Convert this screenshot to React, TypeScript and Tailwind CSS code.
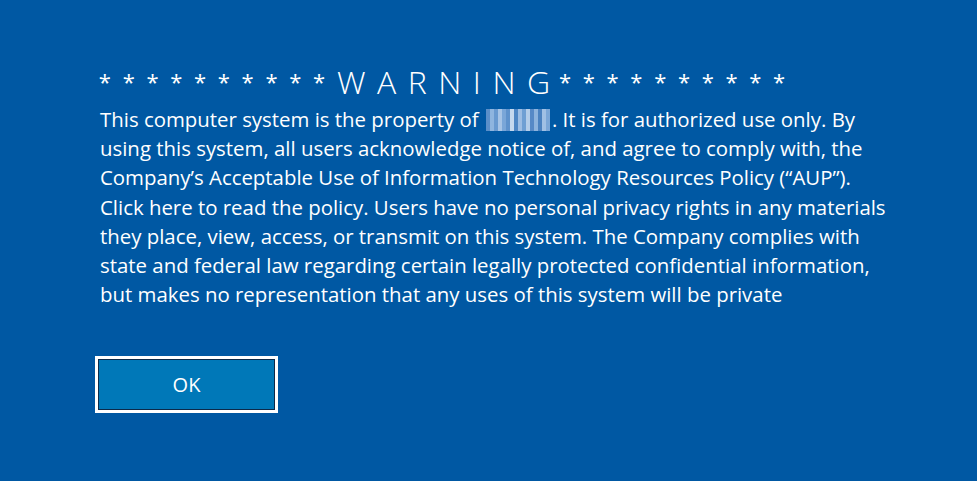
import React from "react";

const lines = [
  "using this system, all users acknowledge notice of, and agree to comply with, the",
  "Company\u2019s Acceptable Use of Information Technology Resources Policy (\u201CAUP\u201D).",
  "Click here to read the policy. Users have no personal privacy rights in any materials",
  "they place, view, access, or transmit on this system. The Company complies with",
  "state and federal law regarding certain legally protected confidential information,",
  "but makes no representation that any uses of this system will be private",
];

function Redacted() {
  const bars = [
    "#5b8fc9", "#8fb5df", "#6a9ad0", "#a7c4e6", "#7aa6d8", "#5f92cc", "#c5d8ee", "#4f86c4",
    "#9dbde3", "#6f9fd3", "#b4cde9", "#5689c6", "#8db3dd", "#4b82c0", "#a0c0e4", "#7ba7d8",
  ];
  return (
    <span className="inline-flex h-[22px] w-[64px] align-[-4px] mx-[2px]">
      {bars.map((c, i) => (
        <span key={i} className="flex-1 h-full" style={{ backgroundColor: c }} />
      ))}
    </span>
  );
}

function Stars() {
  return (
    <span className="relative top-[-4px] inline-flex text-[22px] font-normal">
      {Array.from({ length: 10 }).map((_, i) => (
        <span key={i} className="inline-block w-[23.8px] text-center">
          *
        </span>
      ))}
    </span>
  );
}

export default function App() {
  return (
    <div
      className="w-[977px] h-[481px] bg-[#0058a3] text-white overflow-hidden"
      style={{ fontFamily: '"Open Sans", "Noto Sans", sans-serif' }}
    >
      <div className="pl-[100px] pt-[64px]">
        <div className="h-[36px] leading-[36px] whitespace-nowrap ml-[-7px]">
          <Stars />
          <span className="text-[32px] font-light ml-[6px]">
            <span className="tracking-[11.5px]">WARNIN</span>G
          </span>
          <span className="ml-[3px]">
            <Stars />
          </span>
        </div>
        <div className="text-[20.4px] leading-[29.2px] mt-[5px]">
          <div className="whitespace-nowrap">
            This computer system is the property of <Redacted />. It is for authorized use only. By
          </div>
          {lines.map((l, i) => (
            <div key={i} className="whitespace-nowrap">
              {l}
            </div>
          ))}
        </div>
        <div className="mt-[47px] ml-[-5px]">
          <button className="w-[183px] h-[57px] border-[3px] border-white bg-[#0078b8] shadow-[inset_0_0_0_1px_#0b2a4a] text-[20px] text-white">
            OK
          </button>
        </div>
      </div>
    </div>
  );
}
